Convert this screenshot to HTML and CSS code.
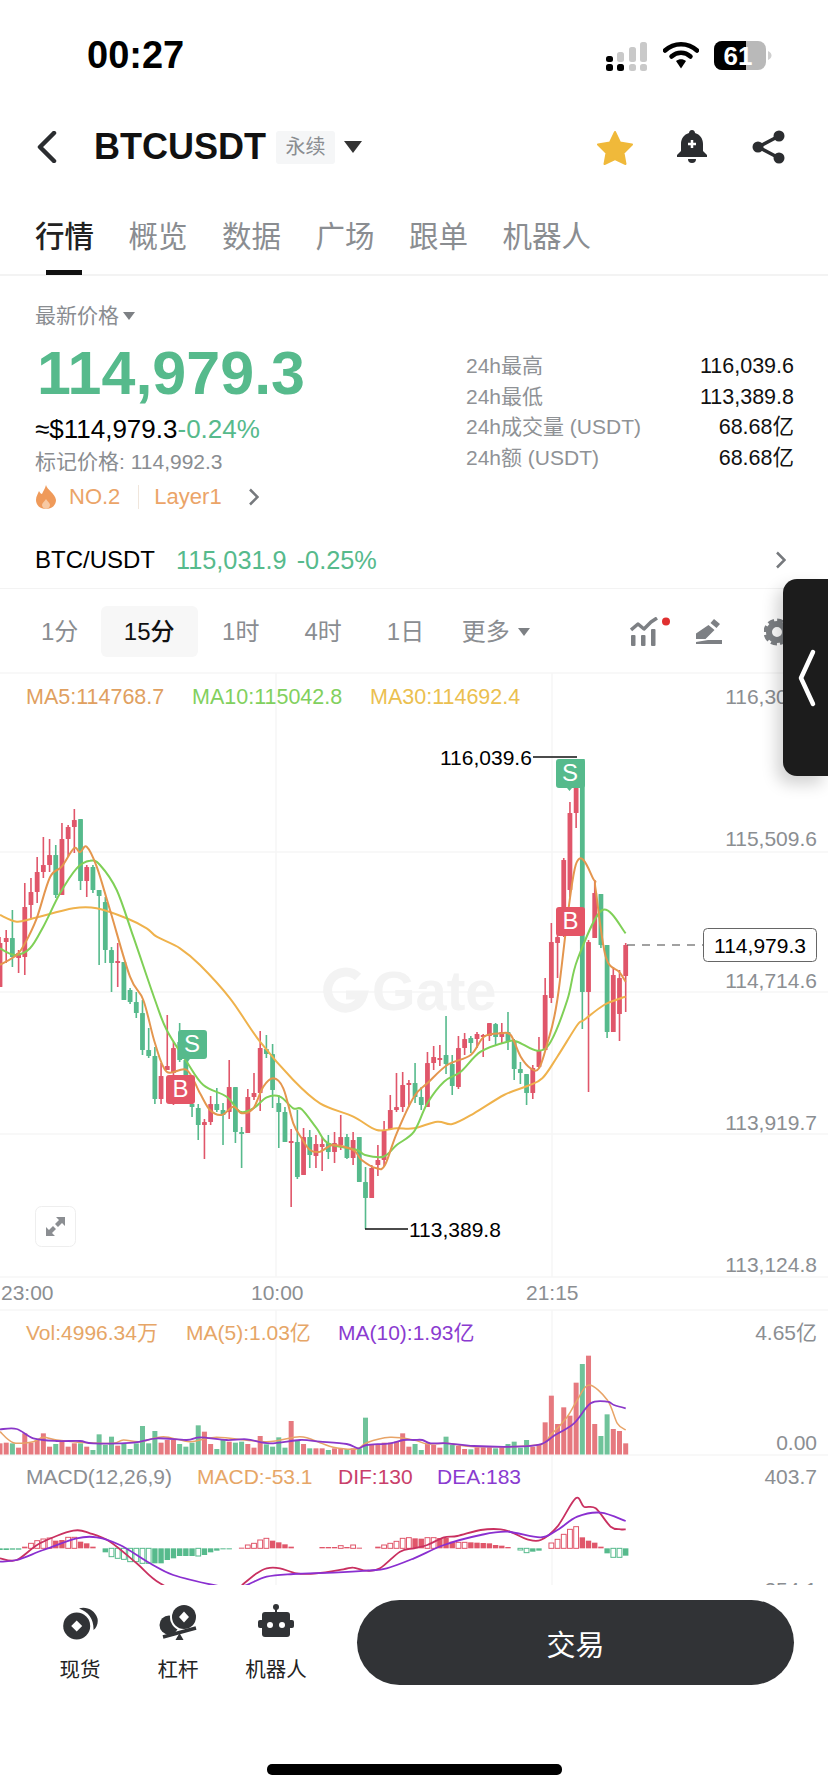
FILE: index.html
```html
<!DOCTYPE html>
<html lang="zh-CN">
<head>
  <meta charset="UTF-8" />
  <meta name="viewport" content="width=device-width, initial-scale=1.0" />
  <title>BTCUSDT</title>
  <link rel="stylesheet" href="styles.css">
</head>
<body>

  <!-- 状态栏 -->
  <div class="status-bar">
    <span class="clock">00:27</span>
    <div class="status-icons">
      <svg width="41" height="30" viewBox="0 0 41 30">
        <rect x="0" y="15" width="7" height="6" rx="2.500" fill="#000"/>
        <rect x="0" y="23" width="7" height="7" rx="2.500" fill="#000"/>
        <rect x="11" y="23" width="7" height="7" rx="2.500" fill="#000"/>
        <rect x="11" y="11" width="7" height="10" rx="2.500" fill="#c9c9c9"/>
        <rect x="23" y="6" width="7" height="15" rx="2.500" fill="#c9c9c9"/>
        <rect x="23" y="23" width="7" height="7" rx="2.500" fill="#c9c9c9"/>
        <rect x="34" y="1" width="7" height="20" rx="2.500" fill="#c9c9c9"/>
        <rect x="34" y="23" width="7" height="7" rx="2.500" fill="#c9c9c9"/>
      </svg>
      <svg width="36" height="28" viewBox="0 0 36 28">
        <path d="M2 9.500C11 1 25 1 34 9.500" fill="none" stroke="#000" stroke-width="4.500" stroke-linecap="round"/>
        <path d="M8.500 15.500C14 10.500 22 10.500 27.500 15.500" fill="none" stroke="#000" stroke-width="4.500" stroke-linecap="round"/>
        <path d="M13 20c3-2.500 7-2.500 10 0l-5 7.500z" fill="#000"/>
      </svg>
      <svg class="battery" width="58" height="30" viewBox="0 0 58 30">
        <rect x="0" y="0" width="52" height="29" rx="8" fill="#b9b9b9"/>
        <path d="M8 0h24v29H8a8 8 0 0 1-8-8V8a8 8 0 0 1 8-8z" fill="#000"/>
        <path d="M54 10c2.500 1 3.500 3 3.500 4.500S56.500 18 54 19z" fill="#cfcfcf"/>
        <text class="battery-text" x="24" y="24" text-anchor="middle">61</text>
      </svg>
    </div>
  </div>

  <!-- 标题栏 -->
  <header class="top-bar">
    <svg width="20" height="32" viewBox="0 0 20 32"><path d="M17 2L3 16l14 14" fill="none" stroke="#2b2d30" stroke-width="4.500" stroke-linecap="round" stroke-linejoin="round"/></svg>
    <h1 class="symbol">BTCUSDT</h1>
    <span class="symbol-tag">永续</span>
    <span class="arrow-down"></span>
    <div class="top-actions">
      <svg width="38" height="35" viewBox="0 0 38 35"><path d="M19 2l5 10.500 12 2-8.500 8.500 2 11L19 29 8.500 34l2-11L2 14.500l12-2z" fill="#f0b93a" stroke="#f0b93a" stroke-width="2" stroke-linejoin="round"/></svg>
      <svg width="30" height="34" viewBox="0 0 30 34">
        <path d="M15 0c2 0 3 1.500 3 3 5 1.500 8 5.500 8 11v7l4 4v2H0v-2l4-4v-7c0-5.500 3-9.500 8-11 0-1.500 1-3 3-3z" fill="#2b2d30"/>
        <path d="M11 29h8a4 4 0 0 1-8 0z" fill="#2b2d30"/>
        <path d="M15 10v8M11 14h8" stroke="#fff" stroke-width="2.500"/>
      </svg>
      <svg width="33" height="34" viewBox="0 0 33 34">
        <path d="M27 6L6 17l21 11" fill="none" stroke="#2b2d30" stroke-width="3.500"/>
        <circle cx="27" cy="6" r="5.500" fill="#2b2d30"/>
        <circle cx="6" cy="17" r="5.500" fill="#2b2d30"/>
        <circle cx="27" cy="28" r="5.500" fill="#2b2d30"/>
      </svg>
    </div>
  </header>

  <!-- 顶部标签 -->
  <nav class="tabs">
    <a class="tab active">行情</a>
    <a class="tab">概览</a>
    <a class="tab">数据</a>
    <a class="tab">广场</a>
    <a class="tab">跟单</a>
    <a class="tab">机器人</a>
  </nav>

  <!-- 价格信息 -->
  <section class="quote">
    <div class="quote-left">
      <div class="price-label">最新价格 <span class="arrow-small"></span></div>
      <div class="price-big">114,979.3</div>
      <div class="price-usd">≈$114,979.3<span class="green">-0.24%</span></div>
      <div class="price-mark">标记价格: 114,992.3</div>
      <div class="price-tags">
        <svg width="22" height="24" viewBox="0 0 22 24">
          <path d="M11 0c1 5 9 8 10 15 0 5-4 9-10 9S1 20 1 15c0-4 2-6 3-9 1 2 2 3 3 3 1-3 3-5 4-9z" fill="#ef9a5a"/>
          <path d="M11 14c1 2 4 4 4 6s-2 4-4 4-4-2-4-4 3-4 4-6z" fill="#f7c9a3"/>
        </svg>
        <span class="tag-text">NO.2</span>
        <span class="tag-sep"></span>
        <span class="tag-text">Layer1</span>
        <svg class="tag-more" width="11" height="18" viewBox="0 0 11 18"><path d="M2 1.500L9.500 9 2 16.500" fill="none" stroke="#76797d" stroke-width="2.500"/></svg>
      </div>
    </div>
    <div class="quote-stats">
      <div class="stat-row"><span>24h最高</span><b>116,039.6</b></div>
      <div class="stat-row"><span>24h最低</span><b>113,389.8</b></div>
      <div class="stat-row"><span>24h成交量 (USDT)</span><b>68.68亿</b></div>
      <div class="stat-row"><span>24h额 (USDT)</span><b>68.68亿</b></div>
    </div>
  </section>

  <div class="spot-row">
    <span class="spot-name">BTC/USDT</span>
    <span class="green spot-price">115,031.9</span>
    <span class="green">-0.25%</span>
    <svg class="spot-more" width="11" height="18" viewBox="0 0 11 18"><path d="M2 1.500L9.500 9 2 16.500" fill="none" stroke="#76797d" stroke-width="2.500"/></svg>
  </div>

  <!-- 周期切换 -->
  <div class="periods">
    <span class="period">1分</span>
    <span class="period active">15分</span>
    <span class="period">1时</span>
    <span class="period">4时</span>
    <span class="period">1日</span>
    <span class="period more">更多 <span class="arrow-small"></span></span>
    <div class="period-tools">
      <svg width="42" height="30" viewBox="0 0 42 30">
        <path d="M1 13l7-6 6 5 7-7 6-4" fill="none" stroke="#7d8084" stroke-width="3.500" stroke-linejoin="round"/>
        <rect x="1" y="18" width="4.500" height="11" rx="1" fill="#7d8084"/>
        <rect x="11" y="18" width="4.500" height="11" rx="1" fill="#7d8084"/>
        <rect x="21" y="12" width="4.500" height="17" rx="1" fill="#7d8084"/>
        <circle cx="36" cy="4.500" r="4" fill="#e03030"/>
      </svg>
      <svg width="26" height="26" viewBox="0 0 26 26">
        <path d="M18 0l6 5-3.500 4-6-5zM12.500 6l6 5-9 9H0v-5.500z" fill="#7d8084"/>
        <path d="M12 21h14v4H0v-2z" fill="#7d8084"/>
      </svg>
      <svg width="42" height="30" viewBox="0 0 42 30">
        <circle cx="13" cy="15" r="8" fill="none" stroke="#7d8084" stroke-width="6"/>
        <circle cx="13" cy="15" r="11.500" fill="none" stroke="#7d8084" stroke-width="4" stroke-dasharray="6 3"/>
        <circle cx="36" cy="4.500" r="4" fill="#e03030"/>
      </svg>
    </div>
  </div>

  <!-- K线图 -->
  <svg class="chart" id="chart" width="828" height="913" viewBox="0 672 828 913">
    <defs>
      <clipPath id="macdClip"><rect x="0" y="1455" width="828" height="130"/></clipPath>
    </defs>

    <g class="grid">
      <path d="M0 673H828M0 852H828M0 992H828M0 1134H828M0 1277H828M0 1310H828M0 1455H828M276 673V1277M552 673V1277M276 1310V1585M552 1310V1585"/>
    </g>

    <g class="watermark">
      <path d="M358 977A18 18 0 1 0 363 995H346" fill="none" stroke="#f3f3f3" stroke-width="9"/>
      <text x="372" y="1010">Gate</text>
    </g>

    <g id="candles"></g>
    <g id="maLines"></g>

    <g class="legend legend-ma">
      <text x="26" y="704" class="c-ma5">MA5:114768.7</text>
      <text x="192" y="704" class="c-ma10">MA10:115042.8</text>
      <text x="370" y="704" class="c-ma30">MA30:114692.4</text>
    </g>
    <g class="axis">
      <text x="817" y="704">116,304.5</text>
      <text x="817" y="846">115,509.6</text>
      <text x="817" y="988">114,714.6</text>
      <text x="817" y="1130">113,919.7</text>
      <text x="817" y="1272">113,124.8</text>
    </g>

    <!-- 最高最低 -->
    <path class="mark-line" d="M533 757H577M365 1229H408"/>
    <text class="mark-text" x="440" y="765">116,039.6</text>
    <text class="mark-text" x="409" y="1237">113,389.8</text>

    <!-- 买卖点 -->
    <g class="bubble sell">
      <path d="M559 759h23a3 3 0 0 1 3 3v23a3 3 0 0 1-3 3h-10l-2.500 3-2.500-3h-8a3 3 0 0 1-3-3v-23a3 3 0 0 1 3-3z"/>
      <text x="570" y="781">S</text>
    </g>
    <g class="bubble buy">
      <path d="M559 907h23a3 3 0 0 1 3 3v23a3 3 0 0 1-3 3h-23a3 3 0 0 1-3-3v-23a3 3 0 0 1 3-3z"/>
      <text x="570.500" y="929">B</text>
    </g>
    <g class="bubble sell">
      <path d="M181 1030h23a3 3 0 0 1 3 3v23a3 3 0 0 1-3 3h-14l-2.500 3-2.500-3h-4a3 3 0 0 1-3-3v-23a3 3 0 0 1 3-3z"/>
      <text x="192" y="1052">S</text>
    </g>
    <g class="bubble buy">
      <path d="M169 1075h23a3 3 0 0 1 3 3v23a3 3 0 0 1-3 3h-23a3 3 0 0 1-3-3v-23a3 3 0 0 1 3-3z"/>
      <text x="180.500" y="1097">B</text>
    </g>

    <!-- 当前价 -->
    <path class="last-line" d="M627 945H703"/>
    <rect class="last-box" x="703.500" y="928.500" width="113" height="33" rx="4"/>
    <text class="mark-text" x="760" y="953" text-anchor="middle">114,979.3</text>

    <!-- 全屏 -->
    <rect class="expand-box" x="35.500" y="1206.500" width="40" height="40" rx="6"/>
    <path class="expand-icon" d="M46 1236v-9l3 3 4-4 3 3-4 4 3 3zM65 1217v9l-3-3-4 4-3-3 4-4-3-3z"/>

    <g class="axis-time">
      <text x="1" y="1300">23:00</text>
      <text x="251" y="1300">10:00</text>
      <text x="526" y="1300">21:15</text>
    </g>

    <g id="volume"></g>
    <g class="legend">
      <text x="26" y="1340" class="c-vol">Vol:4996.34万</text>
      <text x="186" y="1340" class="c-vol">MA(5):1.03亿</text>
      <text x="338" y="1340" class="c-purple">MA(10):1.93亿</text>
    </g>
    <g class="axis">
      <text x="817" y="1340">4.65亿</text>
      <text x="817" y="1450">0.00</text>
    </g>

    <g id="macd" clip-path="url(#macdClip)"></g>
    <g class="legend">
      <text x="26" y="1484" class="c-gray">MACD(12,26,9)</text>
      <text x="197" y="1484" class="c-vol">MACD:-53.1</text>
      <text x="338" y="1484" class="c-dif">DIF:130</text>
      <text x="437" y="1484" class="c-purple">DEA:183</text>
    </g>
    <g class="axis" clip-path="url(#macdClip)">
      <text x="817" y="1484">403.7</text>
      <text x="817" y="1597">254.1</text>
    </g>
  </svg>

  <!-- 底部操作 -->
  <footer class="bottom-bar">
    <div class="action">
      <svg width="36" height="36" viewBox="0 0 36 36">
        <path d="M17 4.500C24 2 33 6 35.500 14.500 36.500 19 34.500 24 31.500 26 32 16 27 8 17 4.500z" fill="#313336"/>
        <circle cx="14.700" cy="22" r="13.500" fill="#313336"/>
        <path d="M14.700 16.500l5.500 5.500-5.500 5.500L9.200 22z" fill="#fff"/>
      </svg>
      <span>现货</span>
    </div>
    <div class="action">
      <svg width="38" height="36" viewBox="0 0 38 36">
        <circle cx="10" cy="21" r="9.500" fill="#313336"/>
        <circle cx="25" cy="13" r="14" fill="#fff"/>
        <circle cx="25" cy="13" r="12" fill="#313336"/>
        <path d="M25 7.500l5 5.500-5 5.500-5-5.500z" fill="#fff"/>
        <path d="M4 33l33-9" stroke="#313336" stroke-width="3.500"/>
        <path d="M16.500 36l4-7 4 7z" fill="#313336"/>
      </svg>
      <span>杠杆</span>
    </div>
    <div class="action">
      <svg width="38" height="36" viewBox="0 0 38 36">
        <circle cx="19" cy="3" r="3" fill="#313336"/>
        <rect x="18" y="4" width="2" height="5" fill="#313336"/>
        <rect x="5" y="8" width="28" height="25" rx="3" fill="#313336"/>
        <rect x="1" y="16" width="36" height="8" rx="2" fill="#313336"/>
        <circle cx="13" cy="21" r="3" fill="#fff"/>
        <circle cx="25" cy="21" r="3" fill="#fff"/>
      </svg>
      <span>机器人</span>
    </div>
    <button class="trade-btn">交易</button>
  </footer>
  <div class="home-indicator"></div>

  <!-- 右侧浮动把手 -->
  <div class="side-handle">
    <svg width="20" height="60" viewBox="0 0 20 60"><path d="M16 4L4 30l12 26" fill="none" stroke="#fff" stroke-width="4.500" stroke-linecap="round" stroke-linejoin="round"/></svg>
  </div>

  <script src="app.js"></script>
</body>
</html>
```

FILE: styles.css
```css
* {
  box-sizing: border-box;
}
body {
  width: 828px;
  height: 1792px;
  margin: 0;
  position: relative;
  overflow: hidden;
  background: #fff;
  color: #000;
  font-family: "Liberation Sans", "Noto Sans CJK SC", sans-serif;
}
svg {
  display: block;
}
.green {
  color: #56ba8c;
}

/* status bar */
.status-bar {
  display: flex;
  justify-content: space-between;
  align-items: flex-start;
  height: 102px;
  padding: 33px 56px 0 87px;
}
.clock {
  font-size: 38px;
  line-height: 44px;
  font-weight: bold;
}
.status-icons {
  display: flex;
  align-items: flex-start;
  gap: 16px;
  margin-top: 8px;
}
.battery {
  margin-left: -1px;
}
.battery-text {
  font-size: 26px;
  font-weight: bold;
  fill: #fff;
}

/* top bar */
.top-bar {
  display: flex;
  align-items: center;
  height: 90px;
  padding: 0 43px 0 37px;
}
.symbol {
  margin: 0 0 0 37px;
  font-size: 36px;
  line-height: 40px;
  font-weight: bold;
  color: #111;
}
.symbol-tag {
  width: 59px;
  height: 33px;
  margin-left: 10px;
  background: #f5f6f7;
  border-radius: 3px;
  color: #8a8d91;
  font-size: 20px;
  line-height: 33px;
  text-align: center;
}
.arrow-down {
  width: 0;
  height: 0;
  margin-left: 9px;
  border-left: 9px solid transparent;
  border-right: 9px solid transparent;
  border-top: 12px solid #333;
}
.top-actions {
  display: flex;
  align-items: center;
  gap: 43px;
  margin-left: auto;
}
.top-actions svg:last-child {
  margin-left: 2px;
}

/* tabs */
.tabs {
  display: flex;
  gap: 34.500px;
  height: 84px;
  padding: 28px 0 0 35px;
  border-bottom: 2px solid #f3f3f3;
}
.tab {
  position: relative;
  color: #8a8d91;
  font-size: 29.500px;
  line-height: 34px;
}
.tab.active {
  color: #222;
  font-weight: 500;
}
.tab.active::after {
  content: "";
  position: absolute;
  left: 11px;
  right: 12px;
  top: 50px;
  height: 5px;
  background: #111;
}

/* quote */
.quote {
  display: flex;
  padding: 26px 34px 21px 35px;
}
.quote-left {
  flex: 1;
}
.price-label {
  display: flex;
  align-items: center;
  gap: 4px;
  color: #8a8d91;
  font-size: 21px;
  line-height: 28px;
}
.arrow-small {
  display: inline-block;
  width: 0;
  height: 0;
  border-left: 6px solid transparent;
  border-right: 6px solid transparent;
  border-top: 8px solid #7d8084;
}
.price-big {
  margin-top: 13px;
  margin-left: 2px;
  color: #56ba8c;
  font-size: 61px;
  line-height: 60px;
  font-weight: bold;
}
.price-usd {
  margin-top: 11px;
  font-size: 26px;
  line-height: 30px;
}
.price-mark {
  margin-top: 4px;
  color: #8a8d91;
  font-size: 21px;
  line-height: 28px;
}
.price-tags {
  display: flex;
  align-items: center;
  height: 28px;
  margin-top: 7px;
}
.tag-text {
  margin-left: 12px;
  color: #eba468;
  font-size: 22px;
  line-height: 28px;
}
.tag-sep {
  width: 1px;
  height: 24px;
  margin-left: 18px;
  margin-right: 3px;
  background: #f0e6dc;
}
.tag-more {
  margin-left: 26px;
}
.quote-stats {
  width: 328px;
  margin-top: 49px;
}
.stat-row {
  display: flex;
  justify-content: space-between;
  height: 30.500px;
  color: #8f9296;
  font-size: 21px;
  line-height: 30.500px;
}
.stat-row b {
  color: #111;
  font-size: 21.500px;
  font-weight: normal;
}

/* spot row */
.spot-row {
  display: flex;
  align-items: center;
  height: 57px;
  padding: 0 42px 0 35px;
  border-bottom: 1px solid #f3f3f3;
  font-size: 25.300px;
}
.spot-name {
  font-size: 24px;
}
.spot-price {
  margin-left: 21px;
  margin-right: 10px;
}
.spot-more {
  margin-left: auto;
}

/* periods */
.periods {
  display: flex;
  align-items: center;
  height: 83px;
  padding: 17px 0 15px 18.500px;
  color: #8a8d91;
  font-size: 24px;
}
.period {
  padding: 0 22.500px;
  line-height: 51px;
}
.period.active {
  margin-right: 2px;
  padding: 0 23px;
  background: #f7f7f7;
  border-radius: 6px;
  color: #111;
  font-weight: 500;
}
.period.more {
  display: flex;
  align-items: center;
  gap: 8px;
  padding-left: 15px;
}
.period-tools {
  display: flex;
  align-items: center;
  gap: 27px;
  margin-left: auto;
  padding-right: 22px;
}
.period-tools svg:nth-child(2) {
  margin-left: -3px;
}
.period-tools svg:nth-child(3) {
  margin-left: 15px;
}

/* chart */
.grid path {
  fill: none;
  stroke: #f6f6f6;
  stroke-width: 1.500;
}
.watermark text {
  fill: #f3f3f3;
  font-size: 56px;
  font-weight: bold;
}
.legend text,
.axis text,
.axis-time text,
.mark-text {
  font-size: 21px;
}
.legend-ma text {
  font-size: 21.500px;
}
.axis text {
  fill: #8b8e92;
  text-anchor: end;
}
.axis-time text {
  fill: #8b8e92;
}
.mark-text {
  fill: #000;
}
.c-ma5 { fill: #e0a060; }
.c-ma10 { fill: #82d05e; }
.c-ma30 { fill: #ebc050; }
.c-vol { fill: #e6a667; }
.c-purple { fill: #8a3bd0; }
.c-gray { fill: #8b8e92; }
.c-dif { fill: #c9406a; }

.mark-line {
  fill: none;
  stroke: #111;
  stroke-width: 1.500;
}
.bubble text {
  fill: #fff;
  font-size: 24px;
  text-anchor: middle;
}
.bubble.sell path { fill: #56ba8c; }
.bubble.buy path { fill: #e45566; }
.last-line {
  stroke: #444;
  stroke-width: 1.200;
  stroke-dasharray: 8 7;
}
.last-box {
  fill: #fff;
  stroke: #666;
}
.expand-box {
  fill: #fff;
  stroke: #eee;
}
.expand-icon {
  fill: #8b8e92;
}

/* bottom bar */
.bottom-bar {
  display: flex;
  height: 100px;
  padding: 15px 34px 0 31px;
  background: #fff;
}
.action {
  display: flex;
  flex-direction: column;
  align-items: center;
  width: 98px;
  padding-top: 4px;
  color: #222;
  font-size: 20.500px;
  line-height: 28px;
}
.action span {
  margin-top: 16px;
}
.trade-btn {
  width: 437px;
  height: 85px;
  margin-left: 32px;
  border: none;
  border-radius: 43px;
  background: #313336;
  color: #fff;
  font-family: inherit;
  font-size: 29px;
}
.home-indicator {
  width: 295px;
  height: 11px;
  margin: 79px 0 0 267px;
  border-radius: 5px;
  background: #000;
}

/* floating handle */
.side-handle {
  position: absolute;
  top: 579px;
  right: 0;
  display: flex;
  align-items: center;
  justify-content: center;
  width: 45px;
  height: 197px;
  border-radius: 14px 0 0 14px;
  background: #1c1c1c;
  box-shadow: -6px 8px 16px rgba(0, 0, 0, 0.18);
}
.side-handle svg {
  margin-left: 2px;
}
```

FILE: app.js
```js
// 数据都是屏幕坐标, 蜡烛: [颜色, 最高, 最低, 实体上, 实体下]
const candles = [
  ['r',937,987,943,987],['r',930,963,938,942],['g',910,967,938,957],['r',950,973,953,958],['r',883,975,907,957],
  ['r',878,918,892,905],['r',857,903,872,892],['r',837,878,865,872],['r',839,872,855,865],['g',845,898,855,895],
  ['r',823,895,839,895],['r',825,857,827,839],['r',809,853,820,827],['g',819,890,819,881],['r',865,897,867,881],
  ['g',865,893,867,890],['g',890,965,890,896],['g',897,963,902,950],['g',947,992,950,963],['r',943,987,961,963],
  ['g',962,1000,962,1000],['g',988,1004,990,1002],['g',992,1018,1002,1013],['g',1000,1055,1013,1050],['g',1028,1058,1050,1056],
  ['g',1047,1104,1056,1099],['r',1063,1104,1076,1099],['r',1015,1070,1066,1070],['r',1042,1105,1048,1073],['g',1023,1062,1042,1060],
  ['g',1060,1075,1060,1075],['g',1100,1117,1104,1107],['g',1104,1140,1108,1125],['r',1119,1159,1122,1125],['r',1096,1125,1104,1122],
  ['g',1088,1112,1104,1110],['g',1103,1145,1110,1115],['r',1060,1119,1087,1112],['g',1087,1143,1087,1132],['g',1127,1168,1132,1134],
  ['r',1089,1133,1097,1133],['r',1073,1100,1093,1097],['r',1031,1111,1048,1093],['g',1035,1058,1049,1054],['g',1044,1108,1054,1090],
  ['g',1095,1148,1103,1112],['g',1107,1142,1112,1142],['r',1129,1207,1141,1143],['g',1110,1179,1142,1177],['r',1128,1175,1137,1175],
  ['g',1130,1168,1137,1155],['r',1135,1168,1144,1156],['r',1137,1171,1144,1147],['g',1135,1159,1143,1152],['r',1132,1163,1143,1152],
  ['r',1115,1150,1137,1145],['g',1134,1159,1137,1158],['r',1132,1165,1140,1158],['g',1137,1182,1137,1182],['g',1167,1229,1182,1198],
  ['r',1165,1198,1168,1198],['r',1145,1176,1160,1165],['r',1121,1166,1130,1160],['r',1095,1130,1110,1129],['r',1073,1112,1107,1110],
  ['r',1072,1112,1085,1107],['r',1080,1107,1083,1085],['g',1063,1103,1083,1097],['g',1087,1110,1097,1105],['r',1052,1107,1063,1107],
  ['r',1046,1070,1057,1063],['r',1045,1066,1058,1060],['g',1016,1074,1055,1064],['g',1055,1095,1064,1086],['r',1036,1089,1048,1087],
  ['r',1033,1055,1039,1048],['g',1036,1053,1038,1043],['r',1032,1048,1034,1039],['r',1034,1057,1035,1037],['r',1023,1041,1023,1036],
  ['g',1023,1045,1024,1037],['r',1023,1043,1032,1037],['g',1012,1050,1032,1041],['g',1039,1080,1041,1069],['g',1062,1084,1069,1073],
  ['g',1074,1105,1074,1093],['r',1065,1099,1068,1093],['r',1037,1068,1050,1067],['r',978,1050,995,1050],['r',923,1003,942,998],
  ['r',930,978,937,943],['r',858,937,860,910],['r',802,897,813,890],['r',788,828,788,813],['g',759,1029,759,992],
  ['r',940,1092,942,992],['r',880,938,893,938],['g',894,948,894,945],['g',945,1038,945,1032],['r',967,1032,975,1032],
  ['r',970,1041,978,1014],['r',943,1012,945,976]
];

const volTops = [
  430,428,430,443,400,428,420,400,440,432,425,440,430,430,440,450,403,435,410,437,
  430,447,430,378,430,393,428,420,420,432,440,428,376,395,432,447,420,425,428,425,
  432,443,408,433,440,412,443,363,420,432,445,445,445,450,445,445,447,445,445,353,
  432,435,428,428,425,400,440,432,450,432,435,443,410,435,438,447,448,442,442,442,
  445,442,432,425,443,420,440,432,367,287,372,322,347,248,192,167,372,408,343,387,393,430
];

const macdVals = [
  750,750,749,749,740,730,722,717,714,722,720,712,712,725,730,740,745,757,770,775,
  778,785,785,790,790,790,790,780,775,768,768,768,768,765,757,752,748,746,745,743,
  735,730,720,715,722,727,733,740,745,745,745,745,741,741,741,737,741,735,743,745,
  745,740,735,730,724,715,713,715,716,713,713,714,714,725,727,727,727,728,729,730,
  735,737,741,745,750,758,755,752,745,729,718,703,688,680,712,722,728,740,760,772,772,767
];
const macdHollow = [5,6,7,8,11,12,18,19,20,21,22,23,24,32,40,41,42,43,55,57,62,63,64,65,66,69,70,74,75,84,85,89,90,91,92,93,99,100];

const STEP = 6.195;
const NS = 'http://www.w3.org/2000/svg';

function add(parent, tag, attrs) {
  const el = document.createElementNS(NS, tag);
  for (const k in attrs) el.setAttribute(k, attrs[k]);
  parent.appendChild(el);
  return el;
}

// 量线是从放大图里读的, 3倍坐标 -> 屏幕坐标
function seg(ox, oy, nums) {
  const pts = [];
  for (let i = 0; i < nums.length; i += 2) {
    pts.push([ox + nums[i] / 3, oy + nums[i + 1] / 3]);
  }
  return pts;
}

function smooth(pts) {
  let d = `M${pts[0][0]} ${pts[0][1]}`;
  for (let i = 0; i < pts.length - 1; i++) {
    const p0 = pts[i - 1] || pts[i];
    const p1 = pts[i];
    const p2 = pts[i + 1];
    const p3 = pts[i + 2] || p2;
    const c1x = p1[0] + (p2[0] - p0[0]) / 6;
    const c1y = p1[1] + (p2[1] - p0[1]) / 6;
    const c2x = p2[0] - (p3[0] - p1[0]) / 6;
    const c2y = p2[1] - (p3[1] - p1[1]) / 6;
    d += `C${c1x.toFixed(1)} ${c1y.toFixed(1)} ${c2x.toFixed(1)} ${c2y.toFixed(1)} ${p2[0].toFixed(1)} ${p2[1].toFixed(1)}`;
  }
  return d;
}

function line(parent, pts, color, width) {
  add(parent, 'path', { d: smooth(pts), fill: 'none', stroke: color, 'stroke-width': width, 'stroke-linejoin': 'round' });
}

// 蜡烛
const candleBox = document.getElementById('candles');
candles.forEach((c, i) => {
  const x = i * STEP;
  const color = c[0] === 'r' ? '#e0566a' : '#56ba8c';
  add(candleBox, 'rect', { x: x - 0.8, y: c[1], width: 1.6, height: c[2] - c[1], fill: color });
  add(candleBox, 'rect', { x: x - 2.4, y: c[3], width: 4.8, height: Math.max(c[4] - c[3], 1.5), rx: 0.6, fill: color });
});

// 均线
const maBox = document.getElementById('maLines');
const ma30 = [
  ...seg(0, 670, [0,735,50,755,100,745,220,715,290,715,380,745,440,775,470,800,540,835,600,885,690,985]),
  ...seg(0, 1000, [780,125,880,240,960,310,1060,350,1130,390,1190,385]),
  ...seg(414, 1000, [0,385,70,365,115,372,180,340,270,285,340,258,385,235,430,170,490,75,510,60,570,15]),
  ...seg(414, 670, [620,985,635,980])
];
const ma10 = [
  ...seg(0, 670, [0,835,45,855,90,835,130,770,180,670,230,595,270,572,300,585,350,660,400,800,465,990]),
  ...seg(0, 1000, [500,90,560,185,610,255,680,290,720,335,760,325,800,292,840,290,880,325,905,328,950,385,985,430,1070,450,1095,465,1150,470,1190,435]),
  ...seg(414, 1000, [0,395,40,310,90,245,140,215,200,155,280,125,310,125,370,152,410,125,460,0]),
  ...seg(414, 670, [490,870,565,720,635,790])
];
const ma5 = [
  ...seg(0, 670, [0,885,50,855,75,820,110,745,150,622,185,590,222,535,240,547,260,530,290,590,330,720,390,920,430,990]),
  ...seg(0, 1000, [465,130,500,215,560,210,600,280,630,330,665,345,700,320,725,340,760,325,790,260,820,235,850,265,880,370,905,415,930,450,960,455,1000,435,1060,450,1085,480,1130,505,1155,495,1190,400]),
  ...seg(414, 1000, [0,290,40,250,100,195,170,165,210,110,260,100,290,105,320,170,350,205,375,205,400,130,430,0]),
  ...seg(414, 670, [485,585,540,630,545,660,575,860,615,905,635,935])
];
line(maBox, ma30, '#efb24c', 2);
line(maBox, ma10, '#7fd057', 2);
line(maBox, ma5, '#e4964e', 2);

// 成交量
const volBox = document.getElementById('volume');
volTops.forEach((top, i) => {
  const y = 1300 + top / 3;
  const color = candles[i][0] === 'r' ? '#e6797f' : '#6fc39a';
  add(volBox, 'rect', { x: i * STEP - 2.5, y: y, width: 5, height: 1454.5 - y, fill: color });
});
line(volBox, [
  ...seg(0, 1300, [0,395,40,428,100,425,130,412,170,420,260,428,340,430,370,420,420,425,490,410,570,425,650,412,800,425,900,410,960,428,1000,442,1070,447,1100,428,1170,412]),
  ...seg(414, 1300, [0,420,40,432,100,430,180,440,370,435,410,405,460,350,490,300,525,255,580,300,610,370,635,390])
], '#e8a468', 1.5);
line(volBox, [
  ...seg(0, 1300, [0,388,50,387,100,415,170,423,240,423,280,430,400,428,470,415,560,420,600,412,680,420,740,418,810,430,900,420,960,425,1040,432,1075,445,1100,435,1170,430,1210,420]),
  ...seg(414, 1300, [0,420,25,420,50,430,100,430,180,438,300,440,380,433,420,407,480,370,530,310,580,305,600,315,635,325])
], '#8a37c9', 1.8);

// MACD
const macdBox = document.getElementById('macd');
const ZERO = 745;
macdVals.forEach((v, i) => {
  if (v === ZERO) return;
  const top = 1300 + Math.min(v, ZERO) / 3;
  const h = Math.max(Math.abs(v - ZERO) / 3, 1);
  const color = v < ZERO ? '#e0566a' : '#56ba8c';
  if (macdHollow.includes(i)) {
    add(macdBox, 'rect', { x: i * STEP - 2.4, y: top, width: 4.8, height: h, fill: '#fff', stroke: color, 'stroke-width': 1 });
  } else {
    add(macdBox, 'rect', { x: i * STEP - 2.7, y: top, width: 5.4, height: h, fill: color });
  }
});
line(macdBox, [
  ...seg(0, 1300, [0,775,50,780,120,730,220,692,270,700,330,725,410,790,480,850,600,900,700,880,730,852,770,820,800,805,840,805,890,820,950,820,1030,808,1060,803,1100,812,1140,805,1200,755]),
  ...seg(414, 1300, [0,745,40,735,90,712,130,708,200,690,260,688,300,700,340,718,380,720,430,680,485,595,510,620,545,625,590,680,620,688,635,688])
], '#c93060', 1.8);
line(macdBox, [
  ...seg(0, 1300, [0,785,50,780,130,750,230,715,290,712,360,735,450,790,520,825,640,855,700,862,740,855,800,830,880,822,1000,818,1100,812,1160,805]),
  ...seg(414, 1300, [0,775,90,735,200,705,280,695,380,712,430,690,490,650,560,638,635,663])
], '#8a2fd0', 1.8);
```
